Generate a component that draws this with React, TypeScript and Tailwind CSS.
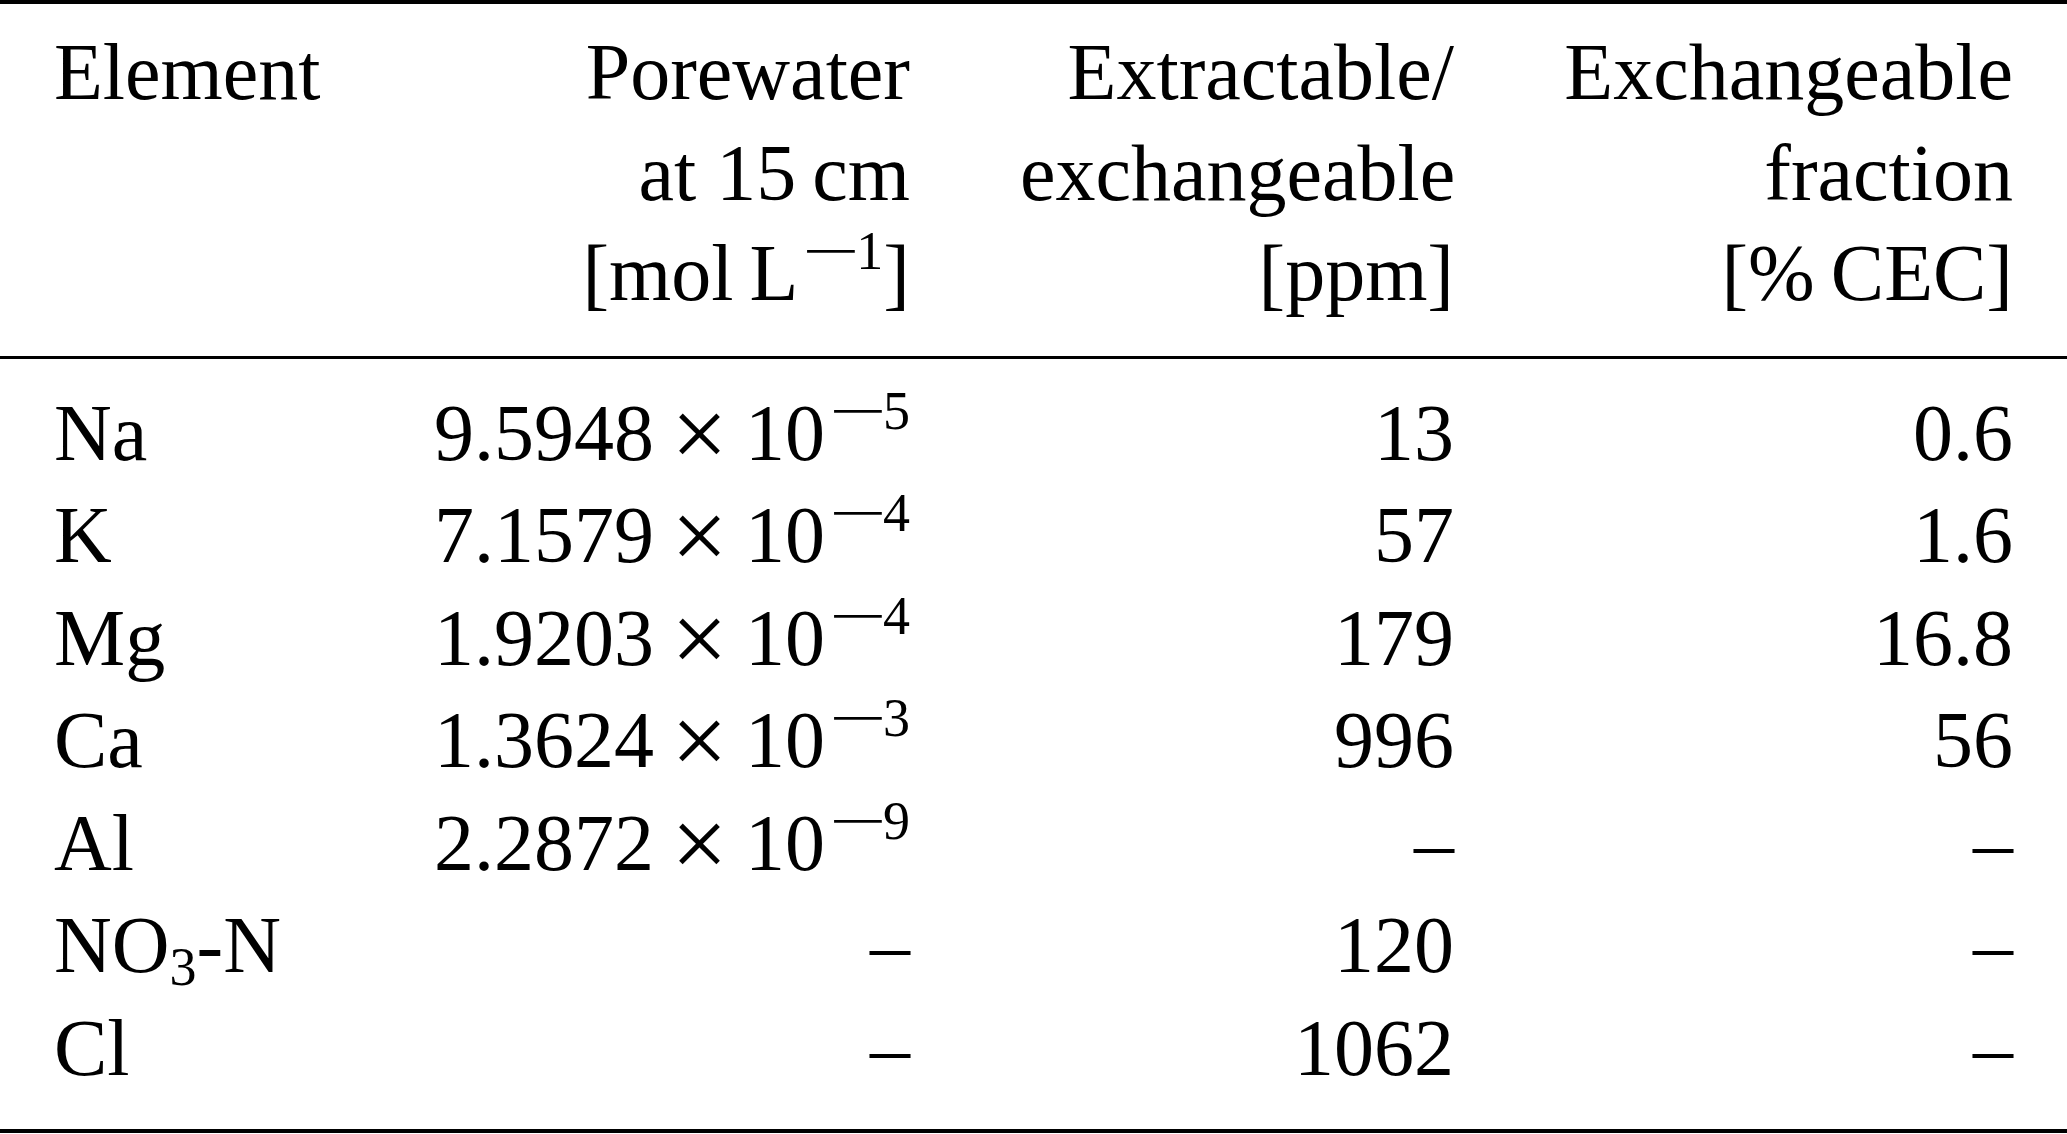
import type { ReactNode } from "react";

type Row = {
  el: ReactNode;
  mant?: string;
  exp?: string;
  ext: string;
  frac: string;
};

const Minus = () => (
  <span className="inline-block w-[58px] pl-[4px] text-center scale-x-[1.9]">−</span>
);

const Sup = ({ children }: { children: ReactNode }) => (
  <span className="relative -top-[31px] text-[54px] leading-none">{children}</span>
);

const Sci = ({ mant, exp }: { mant: string; exp: string }) => (
  <span className="whitespace-nowrap">
    {mant}
    <span className="inline-block mx-[23px] scale-125">×</span>
    10
    <Sup>
      <Minus />
      {exp}
    </Sup>
  </span>
);

const rows: Row[] = [
  { el: "Na", mant: "9.5948", exp: "5", ext: "13", frac: "0.6" },
  { el: "K", mant: "7.1579", exp: "4", ext: "57", frac: "1.6" },
  { el: "Mg", mant: "1.9203", exp: "4", ext: "179", frac: "16.8" },
  { el: "Ca", mant: "1.3624", exp: "3", ext: "996", frac: "56" },
  { el: "Al", mant: "2.2872", exp: "9", ext: "–", frac: "–" },
  {
    el: (
      <>
        NO
        <span className="relative top-[13px] text-[54px] leading-none">3</span>
        -N
      </>
    ),
    ext: "120",
    frac: "–",
  },
  { el: "Cl", ext: "1062", frac: "–" },
];

const cols = "grid grid-cols-[263px_483px_434px_449px] gap-x-[110px] px-[54px]";

export default function App() {
  return (
    <div className="w-[2067px] h-[1134px] bg-white text-black text-[80px] font-['Liberation_Serif',serif] overflow-hidden">
      <div
        className={`${cols} pt-[18px] pb-[32px] border-t-[4px] border-b-[3px] border-black leading-[100.5px]`}
      >
        <div>Element</div>
        <div className="text-right">
          <div>Porewater</div>
          <div>at 15&#8201;cm</div>
          <div>
            [mol&#8201;L
            <Sup>
              <Minus />1
            </Sup>
            ]
          </div>
        </div>
        <div className="text-right">
          <div>Extractable/</div>
          <div>exchangeable</div>
          <div>[ppm]</div>
        </div>
        <div className="text-right">
          <div>Exchangeable</div>
          <div>fraction</div>
          <div>[%&#8201;CEC]</div>
        </div>
      </div>

      <div className={`${cols} pt-[23px] pb-[30px] border-b-[4px] border-black leading-[102.5px]`}>
        {rows.map((r, i) => (
          <div key={i} className="contents">
            <div>{r.el}</div>
            <div className="text-right">
              {r.mant && r.exp ? <Sci mant={r.mant} exp={r.exp} /> : "–"}
            </div>
            <div className="text-right">{r.ext}</div>
            <div className="text-right">{r.frac}</div>
          </div>
        ))}
      </div>
    </div>
  );
}
